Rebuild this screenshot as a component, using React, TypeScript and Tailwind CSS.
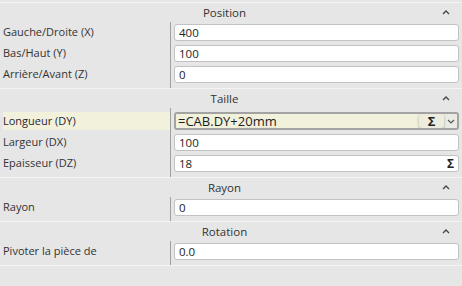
const ChevronUp = () => (
  <svg width="8" height="5" viewBox="0 0 8 5" className="shrink-0">
    <polyline points="1,4 4,1 7,4" fill="none" stroke="#444" strokeWidth="1.3" />
  </svg>
);

const ChevronDown = () => (
  <svg width="8" height="5" viewBox="0 0 8 5" className="shrink-0">
    <polyline points="1,1 4,4 7,1" fill="none" stroke="#555" strokeWidth="1.2" />
  </svg>
);

interface Field {
  label: string;
  value: string;
  active?: boolean;
  sigma?: boolean;
}

interface SectionProps {
  title: string;
  fields: Field[];
  topPad?: string;
}

const FieldRow = ({ field }: { field: Field }) => {
  if (field.active) {
    return (
      <div className="pr-[3px]">
        <div className="flex h-[18px] items-stretch overflow-hidden rounded-[3px] border-2 border-[#a3a3a3] bg-[#ebebe6] text-[13px] text-[#1e1e1e]">
          <div className="flex flex-1 items-center bg-[#f1f1dc] pl-[2px]">
            <span className="leading-none">
              =CAB.DY+
              <span className="underline decoration-dotted decoration-[#e0533c] underline-offset-2">20mm</span>
            </span>
          </div>
          <div className="flex w-[25px] items-center justify-center rounded-[3px] bg-[#ececdf] text-[13px] font-bold leading-none text-[#222] shadow-[0_1px_3px_rgba(0,0,0,0.3)]">
            Σ
          </div>
          <div className="flex w-[13px] items-center justify-center">
            <ChevronDown />
          </div>
        </div>
      </div>
    );
  }
  return (
    <div className="pr-[3px]">
      <div className="flex h-[17px] items-center justify-between rounded-[3px] border border-[#c2c2c2] bg-white pl-[4px] pr-[4px] text-[11.5px] text-[#222]">
        <span>{field.value}</span>
        {field.sigma && <span className="text-[12px] font-bold leading-none text-[#222]">Σ</span>}
      </div>
    </div>
  );
};

const Section = ({ title, fields, topPad = "pt-[2px]" }: SectionProps) => (
  <div className="border-t border-[#f3f3f3]">
    <div className="flex h-[19px] items-center pr-[12px]">
      <div className="flex-1 pl-[7px] text-center text-[11.5px] text-[#333]">{title}</div>
      <ChevronUp />
    </div>
    <div className="grid grid-cols-[170px_1fr]">
      <div className={`flex flex-col gap-[4px] pb-[5px] pl-[3px] ${topPad}`}>
        {fields.map((f) => (
          <div
            key={f.label}
            className={`flex items-center text-[11px] ${f.active ? "h-[18px] bg-[#f1f1dc] text-[#2a1f33]" : "h-[17px] text-[#333]"}`}
          >
            {f.label}
          </div>
        ))}
      </div>
      <div className={`flex flex-col gap-[4px] border-l border-[#a0a0a0] pb-[5px] pl-[3px] ${topPad}`}>
        {fields.map((f) => (
          <FieldRow key={f.label} field={f} />
        ))}
      </div>
    </div>
  </div>
);

export default function App() {
  return (
    <div className="h-[286px] w-[462px] overflow-hidden bg-[#e6e6e6] pt-[2px] font-['Open_Sans',sans-serif]">
      <Section
        title="Position"
        fields={[
          { label: "Gauche/Droite (X)", value: "400" },
          { label: "Bas/Haut (Y)", value: "100" },
          { label: "Arrière/Avant (Z)", value: "0" },
        ]}
      />
      <Section
        title="Taille"
        topPad="pt-[4px]"
        fields={[
          { label: "Longueur (DY)", value: "=CAB.DY+20mm", active: true },
          { label: "Largeur (DX)", value: "100" },
          { label: "Epaisseur (DZ)", value: "18", sigma: true },
        ]}
      />
      <Section title="Rayon" fields={[{ label: "Rayon", value: "0" }]} />
      <Section title="Rotation" fields={[{ label: "Pivoter la pièce de", value: "0.0" }]} />
      <div className="border-t border-[#f3f3f3]" />
    </div>
  );
}
